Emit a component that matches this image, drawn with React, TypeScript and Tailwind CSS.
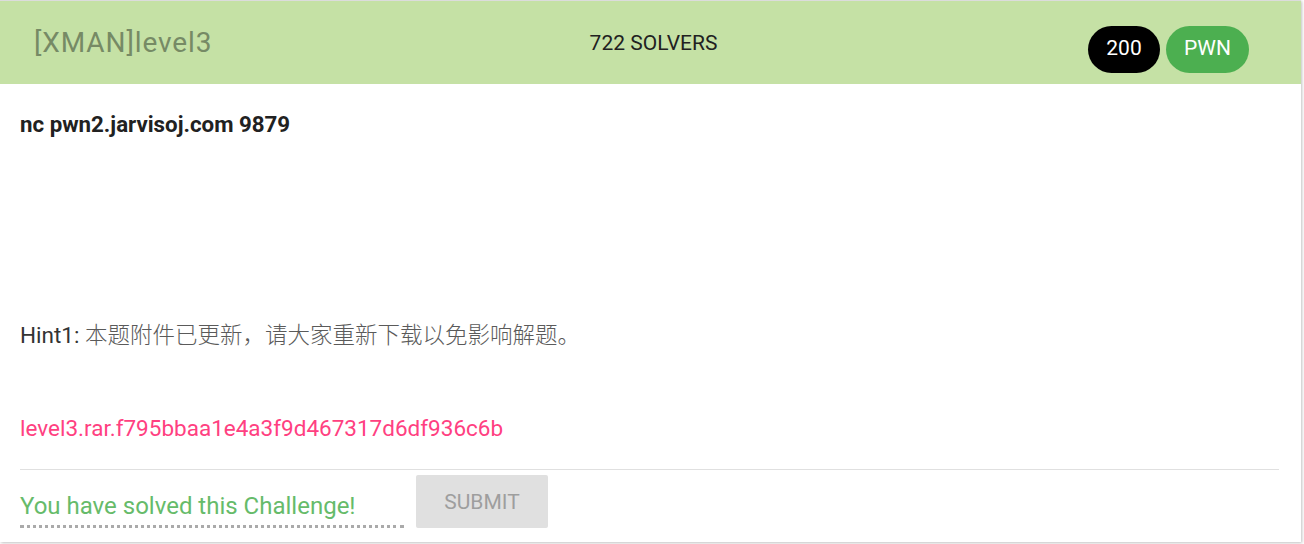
import React from "react";

export default function App() {
  return (
    <div className="w-[1304px] h-[544px] bg-white" style={{ fontFamily: "Roboto, 'Noto Sans CJK SC', sans-serif" }}>
      <div className="w-[1301px] h-[542px] bg-white border-t border-[#dcdcdc] shadow-[1px_1px_3px_rgba(0,0,0,0.25)] flex flex-col">
        <div className="h-[83px] bg-[#c5e1a5] grid grid-cols-3 items-center pl-[34px] pr-[52px]">
          <div className="text-[28px] tracking-[0.9px] text-[#768a65] leading-none pt-[1px]">[XMAN]level3</div>
          <div className="text-center text-[21px] text-[#212121] leading-none pl-[24px] pt-[1px]">722 SOLVERS</div>
          <div className="flex justify-end gap-[6px] pt-[13px]">
            <span className="h-[47px] w-[72px] rounded-full bg-black text-white text-[21px] flex items-center justify-center">200</span>
            <span className="h-[47px] w-[83px] rounded-full bg-[#4caf50] text-white text-[21px] flex items-center justify-center">PWN</span>
          </div>
        </div>
        <div className="px-[20px] flex flex-col">
          <div className="mt-[25px] text-[22.3px] font-bold text-[#212121] leading-[30px]">nc pwn2.jarvisoj.com 9879</div>
          <div className="mt-[179px] text-[22.5px] text-[#333] leading-[30px]">
            Hint1: <span className="text-[#5a5a5a]" style={{ fontFamily: "'Noto Sans CJK SC', sans-serif", fontWeight: 300 }}>本题附件已更新，请大家重新下载以免影响解题。</span>
          </div>
          <div className="mt-[63px] text-[22.5px] text-[#ff4081] leading-[30px]">level3.rar.f795bbaa1e4a3f9d467317d6df936c6b</div>
          <div className="mt-[26px] h-px bg-[#e0e0e0] w-[1259px]"></div>
          <div className="mt-[5px] flex items-start gap-[12px]">
            <div className="w-[384px] h-[53px] border-b-[3px] border-dotted border-[#aaa] text-[24px] text-[#66bb6a] flex items-end pb-[7px] leading-none">
              You have solved this Challenge!
            </div>
            <div className="w-[132px] h-[53px] rounded-[2px] bg-[#e0e0e0] text-[#9e9e9e] text-[21px] flex items-center justify-center pt-[2px]">SUBMIT</div>
          </div>
        </div>
      </div>
    </div>
  );
}
